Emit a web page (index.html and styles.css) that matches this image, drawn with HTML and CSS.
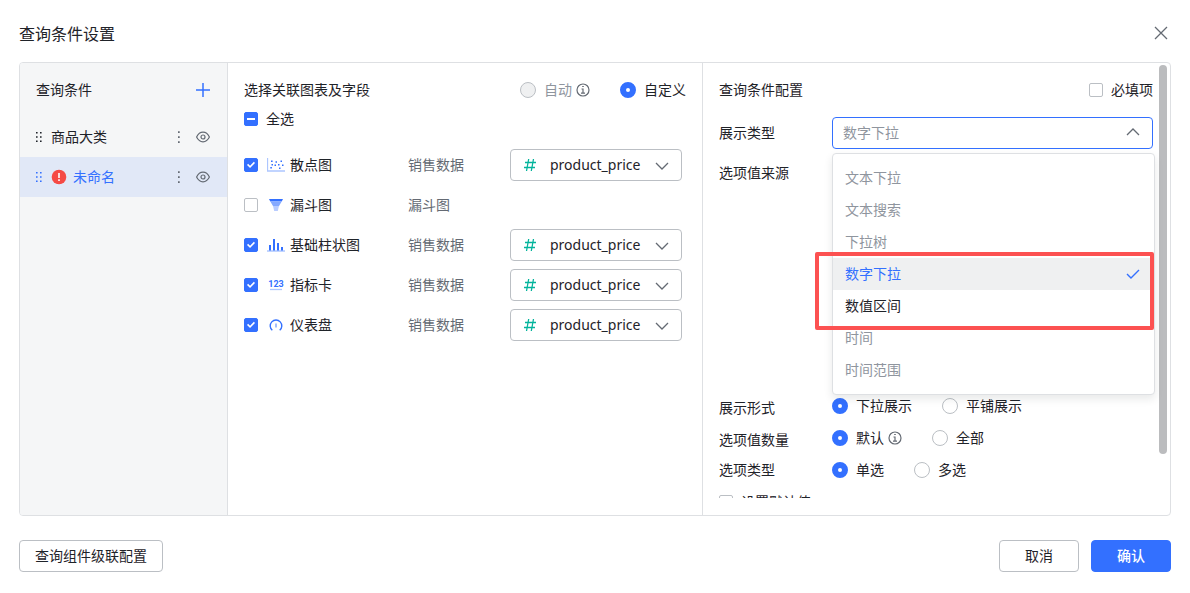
FILE: index.html
```html
<!DOCTYPE html>
<html lang="zh-CN">
<head>
<meta charset="utf-8">
<meta name="viewport" content="width=device-width, initial-scale=1">
<title>查询条件设置</title>
<link rel="stylesheet" href="styles.css">
</head>
<body>
<svg class="sprite" aria-hidden="true">
  <symbol id="i-info" viewBox="0 0 14 14"><circle cx="7" cy="7" r="6" fill="none" stroke="currentColor" stroke-width="1.200"/><path d="M6.200 3.500h1.600M5.500 6h1.500v4M5 10.200h4" fill="none" stroke="currentColor" stroke-width="1.200"/></symbol>
  <symbol id="i-eye" viewBox="0 0 14 14"><path d="M.6 7C2 4.100 4.300 2.200 7 2.200S12 4.100 13.400 7C12 9.900 9.700 11.800 7 11.800S2 9.900.6 7z" fill="none" stroke="currentColor" stroke-width="1.200"/><circle cx="7" cy="7" r="2" fill="none" stroke="currentColor" stroke-width="1.200"/></symbol>
  <symbol id="i-more" viewBox="0 0 4 12"><path d="M1 .2h1.700v1.700H1zM1 5.200h1.700v1.700H1zM1 10.200h1.700v1.700H1z" fill="currentColor"/></symbol>
  <symbol id="i-drag" viewBox="0 0 6 10"><path d="M0 0h1.600v1.600H0zM4 0h1.600v1.600H4zM0 4.200h1.600v1.600H0zM4 4.200h1.600v1.600H4zM0 8.400h1.600V10H0zM4 8.400h1.600V10H4z" fill="currentColor"/></symbol>
  <symbol id="i-down" viewBox="0 0 14 8"><path d="M1 1l6 6 6-6" fill="none" stroke="currentColor" stroke-width="1.300"/></symbol>
  <symbol id="i-hash" viewBox="0 0 12 14"><path d="M4.700 1L2.500 13M9.500 1L7.300 13M1 4.500h11M0 9.500h11" fill="none" stroke="currentColor" stroke-width="1.300"/></symbol>
</svg>
<main class="dialog">
  <header class="dialog-head">
    <h1>查询条件设置</h1>
    <button class="icon-btn" type="button" aria-label="关闭"><svg width="14" height="14" viewBox="0 0 14 14"><path d="M1 1l12 12M13 1L1 13" fill="none" stroke="currentColor" stroke-width="1.300"/></svg></button>
  </header>

  <div class="panel">
    <aside class="side">
      <div class="side-head">
        <h2>查询条件</h2>
        <button class="icon-btn accent" type="button" aria-label="添加"><svg width="14" height="14" viewBox="0 0 14 14"><path d="M7 0v14M0 7h14" fill="none" stroke="currentColor" stroke-width="1.500"/></svg></button>
      </div>
      <ul class="cond-list">
        <li class="cond">
          <svg class="drag" width="6" height="10"><use href="#i-drag"/></svg>
          <span class="cond-name">商品大类</span>
          <button class="icon-btn" type="button" aria-label="更多"><svg width="4" height="12"><use href="#i-more"/></svg></button>
          <button class="icon-btn" type="button" aria-label="显示"><svg width="14" height="14"><use href="#i-eye"/></svg></button>
        </li>
        <li class="cond active">
          <svg class="drag" width="6" height="10"><use href="#i-drag"/></svg>
          <span class="cond-name"><svg class="warn" width="16" height="16" viewBox="0 0 16 16"><circle cx="8" cy="8" r="7.300" fill="#f54a45"/><path d="M8 4v5M8 10.300v1.700" stroke="#fff" stroke-width="1.600"/></svg>未命名</span>
          <button class="icon-btn" type="button" aria-label="更多"><svg width="4" height="12"><use href="#i-more"/></svg></button>
          <button class="icon-btn" type="button" aria-label="显示"><svg width="14" height="14"><use href="#i-eye"/></svg></button>
        </li>
      </ul>
    </aside>

    <section class="charts">
      <div class="section-head">
        <h2>选择关联图表及字段</h2>
        <div class="options">
          <label class="choice muted"><input type="radio" name="mode" disabled>自动<svg class="info" width="14" height="14"><use href="#i-info"/></svg></label>
          <label class="choice"><input type="radio" name="mode" checked>自定义</label>
        </div>
      </div>
      <div class="all-row"><label class="choice"><input class="partial" type="checkbox">全选</label></div>
      <ul class="chart-list">
        <li class="chart">
          <label class="choice"><input type="checkbox" checked><svg class="chart-icon" width="18" height="14" viewBox="0 0 18 14"><path d="M.5 0v13M0 13h18" fill="none" stroke="#adc6ff" stroke-width="1.300"/><path d="M4 2.500h1.600v1.600H4zM8.500 3.300H10v1.500H8.500zM13.500 2.500H15V4h-1.500zM4.500 6H6v1.500H4.500zM3.300 9h1.600v1.600H3.300zM7.500 6.500H9V8H7.500zM11 6h1.500v1.500H11zM15 6.500h1.500V8H15zM12 9.500h1.500V11H12z" fill="#3370ff"/></svg>散点图</label>
          <span class="source">销售数据</span>
          <div class="field"><svg class="hash" width="12" height="14"><use href="#i-hash"/></svg><select aria-label="散点图字段"><option>product_price</option></select><svg class="chev" width="14" height="8"><use href="#i-down"/></svg></div>
        </li>
        <li class="chart">
          <label class="choice"><input type="checkbox"><svg class="chart-icon" width="18" height="14" viewBox="0 0 18 14"><path d="M2 1h14l-1.300 2.500H3.300z" fill="#3370ff"/><path d="M3.300 3.500h11.400L12 8H6z" fill="#85a9ff"/><path d="M6 8h6l-1.200 5H7.200z" fill="#b8ccff"/></svg>漏斗图</label>
          <span class="source">漏斗图</span>
        </li>
        <li class="chart">
          <label class="choice"><input type="checkbox" checked><svg class="chart-icon" width="18" height="14" viewBox="0 0 18 14"><path d="M0 13h18" stroke="#adc6ff" stroke-width="1.300"/><path d="M2 7h2v5.400H2zM6 1h2v11.400H6zM10 5h2v7.400h-2zM14 9h2v3.400h-2z" fill="#3370ff"/></svg>基础柱状图</label>
          <span class="source">销售数据</span>
          <div class="field"><svg class="hash" width="12" height="14"><use href="#i-hash"/></svg><select aria-label="基础柱状图字段"><option>product_price</option></select><svg class="chev" width="14" height="8"><use href="#i-down"/></svg></div>
        </li>
        <li class="chart">
          <label class="choice"><input type="checkbox" checked><svg class="chart-icon" width="18" height="14" viewBox="0 0 18 14"><text class="digits" x="9" y="9" text-anchor="middle">123</text><path d="M3 11.500h12" stroke="#adc6ff" stroke-width="1.300"/></svg>指标卡</label>
          <span class="source">销售数据</span>
          <div class="field"><svg class="hash" width="12" height="14"><use href="#i-hash"/></svg><select aria-label="指标卡字段"><option>product_price</option></select><svg class="chev" width="14" height="8"><use href="#i-down"/></svg></div>
        </li>
        <li class="chart">
          <label class="choice"><input type="checkbox" checked><svg class="chart-icon" width="18" height="14" viewBox="0 0 18 14"><path d="M5.300 12.300A5.800 5.800 0 1 1 12.700 12.300" fill="none" stroke="#3370ff" stroke-width="1.400"/><path d="M9 5.500v4" stroke="#85a9ff" stroke-width="1.500"/></svg>仪表盘</label>
          <span class="source">销售数据</span>
          <div class="field"><svg class="hash" width="12" height="14"><use href="#i-hash"/></svg><select aria-label="仪表盘字段"><option>product_price</option></select><svg class="chev" width="14" height="8"><use href="#i-down"/></svg></div>
        </li>
      </ul>
    </section>

    <section class="config">
      <div class="config-body">
        <div class="section-head">
          <h2>查询条件配置</h2>
          <label class="choice"><input type="checkbox">必填项</label>
        </div>
        <div class="form-row type-row">
          <label for="type">展示类型</label>
          <div class="type-select">
            <select id="type"><option>数字下拉</option></select>
            <svg class="chev up" width="14" height="8"><use href="#i-down"/></svg>
            <div class="menu">
              <ul role="listbox" aria-label="展示类型">
                <li role="option" class="off">文本下拉</li>
                <li role="option" class="off">文本搜索</li>
                <li role="option" class="off">下拉树</li>
                <li role="option" class="on" aria-selected="true">数字下拉<svg width="14" height="12" viewBox="0 0 14 12"><path d="M1 6l4 4 8-8" fill="none" stroke="currentColor" stroke-width="1.400"/></svg></li>
                <li role="option">数值区间</li>
                <li role="option" class="off">时间</li>
                <li role="option" class="off">时间范围</li>
              </ul>
              <div class="highlight"></div>
            </div>
          </div>
        </div>
        <div class="form-row source-row"><span>选项值来源</span></div>
        <div class="form-row" role="radiogroup" aria-labelledby="l-form">
          <span class="low" id="l-form">展示形式</span>
          <div class="options">
            <label class="choice"><input type="radio" name="form" checked>下拉展示</label>
            <label class="choice"><input type="radio" name="form">平铺展示</label>
          </div>
        </div>
        <div class="form-row" role="radiogroup" aria-labelledby="l-count">
          <span class="low" id="l-count">选项值数量</span>
          <div class="options">
            <label class="choice"><input type="radio" name="count" checked>默认<svg class="info" width="14" height="14"><use href="#i-info"/></svg></label>
            <label class="choice"><input type="radio" name="count">全部</label>
          </div>
        </div>
        <div class="form-row" role="radiogroup" aria-labelledby="l-kind">
          <span id="l-kind">选项类型</span>
          <div class="options">
            <label class="choice"><input type="radio" name="kind" checked>单选</label>
            <label class="choice"><input type="radio" name="kind">多选</label>
          </div>
        </div>
        <div class="form-row"><label class="choice"><input type="checkbox">设置默认值</label></div>
      </div>
      <div class="thumb"></div>
    </section>
  </div>

  <footer class="dialog-foot">
    <button class="btn wide" type="button">查询组件级联配置</button>
    <div class="actions">
      <button class="btn" type="button">取消</button>
      <button class="btn primary" type="button">确认</button>
    </div>
  </footer>
</main>
</body>
</html>
```
FILE: styles.css
```css
* { box-sizing: border-box; }
body {
  margin: 0;
  background: #fff;
  color: #1f2329;
  font: 14px/22px "Noto Sans", "Noto Sans CJK SC", sans-serif;
}
h1, h2, ul { margin: 0; padding: 0; font-weight: 400; list-style: none; }
h1 { font-size: 16px; line-height: 24px; }
h2 { font-size: 14px; line-height: 22px; }
svg { display: block; flex: none; }
button, select, input { font: inherit; color: inherit; margin: 0; }
.sprite { position: absolute; width: 0; height: 0; }

.dialog { display: flex; flex-direction: column; height: 100vh; padding: 0 19px 21px; }
.dialog-head { display: flex; align-items: center; justify-content: space-between; height: 62px; padding: 6px 3px 0 0; }
.dialog-head .icon-btn { margin-bottom: 2px; }
.icon-btn { padding: 0; border: 0; background: none; color: #646a73; cursor: pointer; }
.icon-btn.accent { color: #3370ff; }

.panel {
  flex: 1;
  min-height: 0;
  display: grid;
  grid-template-columns: 208px minmax(0, 475fr) minmax(0, 467fr);
  grid-template-rows: minmax(0, 1fr);
  border: 1px solid #dee0e3;
  border-radius: 4px;
  overflow: hidden;
}
.side { background: #f5f6f7; border-right: 1px solid #dee0e3; }
.side-head { display: flex; align-items: center; justify-content: space-between; height: 54px; padding: 0 17px 0 16px; }
.cond { display: flex; align-items: center; height: 40px; padding: 0 17px 0 16px; }
.cond.active { background: #e1e8f7; color: #3370ff; }
.cond-name { flex: 1; display: flex; align-items: center; gap: 6px; margin-left: 9px; }
.cond .icon-btn + .icon-btn { margin-left: 15px; }

.charts { padding: 12px 16px; border-right: 1px solid #dee0e3; }
.section-head { display: flex; align-items: center; justify-content: space-between; height: 30px; }
.all-row { display: flex; align-items: center; height: 28px; margin-bottom: 12px; }
.options { display: flex; align-items: center; gap: 30px; }
.choice { display: inline-flex; align-items: center; gap: 8px; white-space: nowrap; }
.choice.muted { color: #8f959e; }
.info { margin-left: -4px; color: #646a73; }

input { appearance: none; flex: none; border: 1px solid #bbbfc4; background: #fff; }
input[type="checkbox"] { width: 14px; height: 14px; border-radius: 2px; }
input[type="checkbox"]:checked, input.partial {
  display: grid;
  place-items: center;
  border-color: #3370ff;
  background: #3370ff;
}
input[type="checkbox"]:checked::before {
  content: "";
  width: 8px;
  height: 8px;
  background: #fff;
  clip-path: polygon(0 50%, 14% 33%, 38% 58%, 86% 8%, 100% 24%, 38% 88%);
}
input.partial::before { content: ""; width: 8px; height: 2px; background: #fff; }
input[type="radio"] { width: 16px; height: 16px; border-radius: 50%; }
input[type="radio"]:checked { border: 6px solid #3370ff; }
input[type="radio"]:disabled { background: #eff0f1; }

.chart {
  display: grid;
  grid-template-columns: minmax(0, 1fr) 102px 172px;
  align-items: center;
  height: 40px;
  padding-right: 4px;
}
.chart-icon { margin-right: -4px; }
.chart .choice { gap: 9px; }
.digits { font: bold 9px "Liberation Sans Narrow", Roboto, sans-serif; fill: #3370ff; }
.source { color: #646a73; }

.field, .type-select { position: relative; }
select {
  appearance: none;
  display: block;
  width: 100%;
  height: 32px;
  border: 1px solid #bbbfc4;
  border-radius: 4px;
  background: #fff;
}
.field select { padding: 0 30px 0 39px; }
.hash { position: absolute; left: 14px; top: 9px; color: #04b49c; }
.chev { position: absolute; right: 13px; top: 13px; color: #646a73; pointer-events: none; }
.chev.up { top: 11px; transform: scaleY(-1); }

.config { position: relative; padding-bottom: 17px; }
.config-body { height: 100%; padding: 12px 17px 0 16px; overflow: hidden; }
.form-row { display: grid; grid-template-columns: 113px minmax(0, 1fr); align-items: center; height: 32px; }
.type-row { margin: 12px 0 8px; }
.source-row { height: 233px; align-items: start; line-height: 32px; }
.low { padding-top: 4px; }
.type-select select { padding: 0 30px 0 10px; border-color: #3370ff; color: #8f959e; }
.menu {
  position: absolute;
  z-index: 1;
  top: 36px;
  left: 0;
  right: -2px;
  padding: 8px 0;
  border: 1px solid #dee0e3;
  border-radius: 4px;
  background: #fff;
  box-shadow: 0 4px 8px rgba(31, 35, 41, 0.1);
}
.menu li { display: flex; align-items: center; justify-content: space-between; height: 32px; padding: 0 14px 0 12px; }
.menu .off { color: #8f959e; }
.menu .on { background: #eff0f1; color: #3370ff; }
.highlight { position: absolute; left: -18px; right: 0; top: 98px; height: 78px; border: 4px solid #fc5151; border-radius: 2px; pointer-events: none; }
.thumb { position: absolute; right: 3px; top: 2px; width: 8px; height: 86%; border-radius: 4px; background: #bbbcbe; }

.dialog-foot { display: flex; justify-content: space-between; margin-top: 24px; }
.actions { display: flex; gap: 12px; }
.btn { min-width: 80px; height: 32px; padding: 0 15px; border: 1px solid #bbbfc4; border-radius: 4px; background: #fff; }
.btn.primary { border-color: #3370ff; background: #3370ff; color: #fff; font-weight: 500; }
```
